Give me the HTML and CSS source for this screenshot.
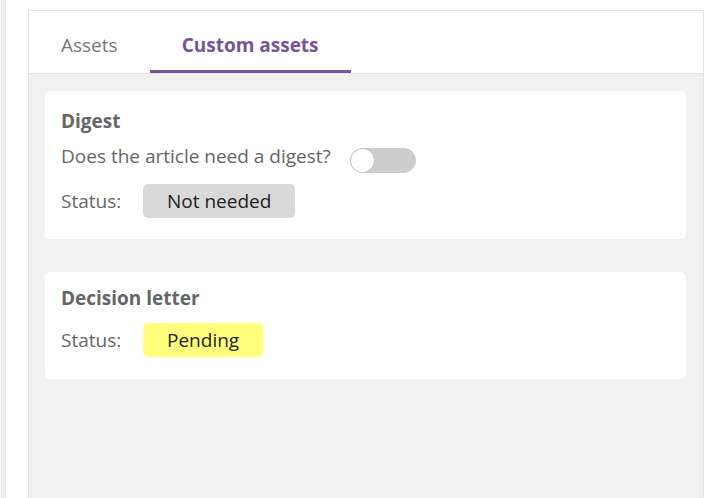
FILE: index.html
```html
<!DOCTYPE html>
<html>

<head>
    <title>Custom assets</title>
    <meta charset="utf-8">
    <meta name="viewport" content="width=device-width, initial-scale=1">
    <link rel="stylesheet" href="styles.css">
</head>

<body>
    <div class="rail"></div>
    <div class="panel">
        <div class="tabs">
            <div class="tab">Assets</div>
            <div class="tab active">Custom assets</div>
        </div>
        <div class="panel-body">
            <div class="card card-digest">
                <h3>Digest</h3>
                <div class="row question">
                    <span>Does the article need a digest?</span>
                    <span class="toggle"><span class="knob"></span></span>
                </div>
                <div class="row status">
                    <span class="label">Status:</span>
                    <span class="badge not-needed">Not needed</span>
                </div>
            </div>
            <div class="card">
                <h3>Decision letter</h3>
                <div class="row status">
                    <span class="label">Status:</span>
                    <span class="badge pending">Pending</span>
                </div>
            </div>
        </div>
    </div>
</body>

</html>
```

FILE: styles.css
```css
body {
    margin: 0;
    padding: 0;
    background: white;
    font-family: "Open Sans", sans-serif;
    color: #666;
    display: flex;
    height: 498px;
    overflow: hidden;
}

.rail {
    width: 3px;
    margin-left: 1px;
    border-left: 1px solid #e2e2e2;
    border-right: 1px solid #e2e2e2;
    background: #f2f2f2;
}

.panel {
    margin-left: 22px;
    margin-top: 10px;
    width: 676px;
    box-sizing: border-box;
    border: 1px solid #e3e3e3;
    border-bottom: none;
    display: flex;
    flex-direction: column;
}

.tabs {
    display: flex;
    height: 63px;
    box-sizing: border-box;
    border-bottom: 1px solid #e3e3e3;
    background: white;
}

.tab {
    height: 62px;
    box-sizing: border-box;
    padding: 22px 32px 0;
    font-size: 19px;
    line-height: 24px;
    color: #777;
    border-bottom: 3px solid transparent;
}

.tab.active {
    color: #76549a;
    font-weight: bold;
    padding: 22px 32px 0;
    border-bottom-color: #76549a;
}

.panel-body {
    flex: 1;
    background: #f1f1f1;
    padding: 17px 17px 0 16px;
}

.card {
    background: white;
    border-radius: 5px;
    padding: 14px 16px 22px;
    margin-bottom: 33px;
}

.card-digest {
    padding-top: 18px;
    padding-bottom: 21px;
}

h3 {
    margin: 0 0 13px;
    font-size: 19px;
    line-height: 24px;
    font-weight: bold;
    color: #666;
}

.card-digest h3 {
    margin-bottom: 11px;
}

.row {
    display: flex;
    font-size: 19px;
    line-height: 24px;
}

.question {
    align-items: flex-start;
    margin-bottom: 11px;
}

.status {
    align-items: center;
}

.label {
    width: 82px;
}

.toggle {
    margin-top: 4px;
    margin-left: 19px;
    width: 66px;
    height: 25px;
    border-radius: 13px;
    background: #cdcdcd;
    display: flex;
    align-items: center;
    padding-left: 1px;
    box-sizing: border-box;
}

.knob {
    width: 23px;
    height: 23px;
    border-radius: 50%;
    background: white;
    box-shadow: 0 0 1px rgba(0, 0, 0, 0.3);
}

.badge {
    height: 34px;
    line-height: 34px;
    padding: 0 24px;
    border-radius: 5px;
    color: #222;
}

.not-needed {
    background: #d9d9d9;
}

.pending {
    background: #ffff7b;
}
```
